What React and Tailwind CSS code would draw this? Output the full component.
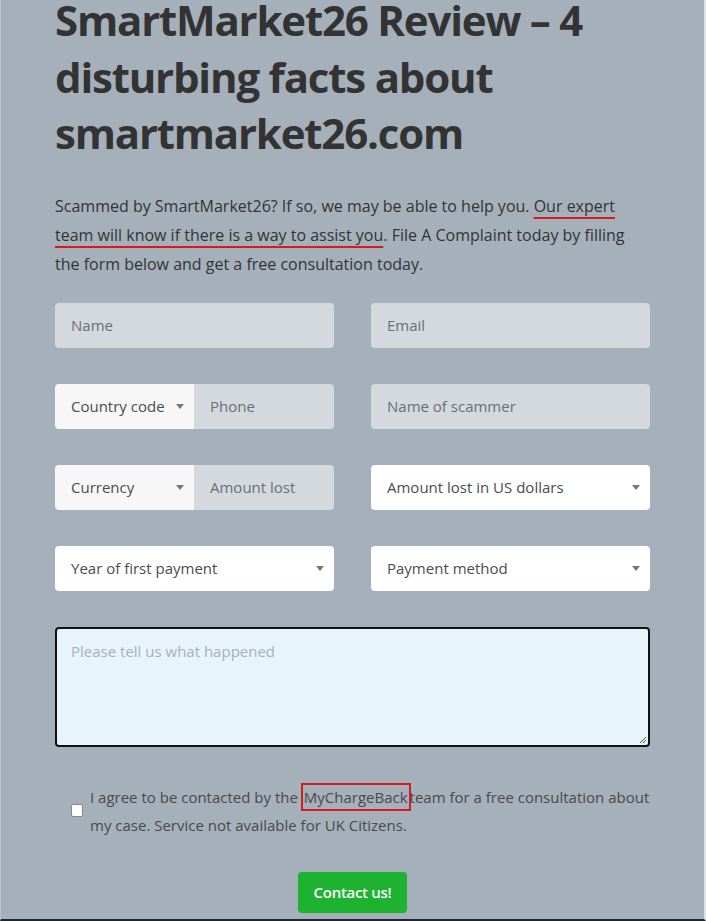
const font = { fontFamily: "'Open Sans', 'Liberation Sans', sans-serif" };

function Caret() {
  return (
    <svg width="8" height="5" viewBox="0 0 8 5" className="shrink-0">
      <path d="M0 0h8L4 5z" fill="#777" />
    </svg>
  );
}

function TextBox({ label }) {
  return (
    <div className="h-[45px] flex-1 rounded bg-[#d3d9df] px-[16px] flex items-center text-[15px] text-[#6b6f73]">
      {label}
    </div>
  );
}

function Select({ label }) {
  return (
    <div className="h-[45px] rounded flex items-center justify-between pl-[16px] pr-[10px] text-[15px] text-[#4a4d50] bg-white">
      <span>{label}</span>
      <Caret />
    </div>
  );
}

function Group({ select, input }) {
  return (
    <div className="flex h-[45px] rounded overflow-hidden">
      <div className="w-[139px] h-full bg-[#f7f7f7] flex items-center justify-between pl-[16px] pr-[10px] text-[15px] text-[#4a4d50]">
        <span>{select}</span>
        <Caret />
      </div>
      <div className="flex-1 h-full bg-[#d3d9df] flex items-center px-[16px] text-[15px] text-[#6b6f73]">
        {input}
      </div>
    </div>
  );
}

export default function App() {
  return (
    <div
      className="w-[706px] h-[921px] overflow-hidden bg-[#a5b0bb] border-l border-[#b8c0c8] border-r-2 border-r-[#dfe3e8] border-b-2 border-b-[#1c2833] text-[#333]"
      style={font}
    >
      <div className="pl-[54px] pr-[56px]">
        <h1 className="-mt-[8px] text-[42px] leading-[56.5px] font-bold tracking-[-1.2px] text-[#333]">
          SmartMarket26 Review – 4 disturbing facts about smartmarket26.com
        </h1>

        <p className="mt-[30px] text-[16px] leading-[29px] text-[#333] w-[595px]">
          Scammed by SmartMarket26? If so, we may be able to help you.{" "}
          <span className="underline decoration-[#d41c1c] decoration-2 underline-offset-[5px]">
            Our expert team will know if there is a way to assist you
          </span>
          . File A Complaint today by filling the form below and get a free consultation today.
        </p>

        <div className="mt-[24px] grid grid-cols-2 gap-x-[37px] gap-y-[36px] w-[595px]">
          <TextBox label="Name" />
          <TextBox label="Email" />
          <Group select="Country code" input="Phone" />
          <TextBox label="Name of scammer" />
          <Group select="Currency" input="Amount lost" />
          <Select label="Amount lost in US dollars" />
          <Select label="Year of first payment" />
          <Select label="Payment method" />
        </div>

        <div className="mt-[36px] w-[595px] h-[120px] rounded-[4px] border-2 border-[#111] bg-[#e8f4fb] px-[14px] py-[11px] text-[15px] text-[#a9b0b6] relative">
          Please tell us what happened
          <svg width="8" height="8" viewBox="0 0 8 8" className="absolute right-[1px] bottom-[1px]">
            <path d="M7 1L1 7M7 4L4 7" stroke="#555" strokeWidth="1" />
          </svg>
        </div>

        <div className="mt-[36px] flex items-center pl-[16px] w-[600px]">
          <div className="w-[12px] h-[13px] rounded-[2px] bg-white border border-[#888] shrink-0 mr-[7px]" />
          <p className="text-[15px] leading-[28px] text-[#4a4a4a]">
            I agree to be contacted by the{" "}
            <span className="outline-2 outline-[#d41c1c] -outline-offset-1 px-[2px] py-[3px]">MyChargeBack</span>
            team for a free consultation about my case. Service not available for UK Citizens.
          </p>
        </div>

        <div className="mt-[33px] flex justify-center w-[595px]">
          <button className="h-[41px] px-[16px] rounded bg-[#1db22f] text-white text-[15px] font-semibold tracking-[-0.3px]">
            Contact us!
          </button>
        </div>
      </div>
    </div>
  );
}
